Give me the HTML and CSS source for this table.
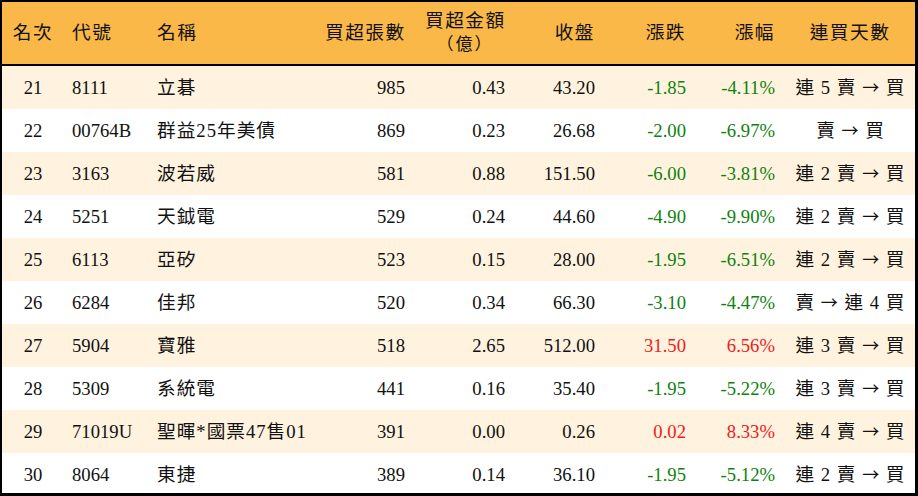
FILE: index.html
```html
<!DOCTYPE html>
<html lang="zh-Hant">
<head>
<meta charset="utf-8">
<title>買超排行</title>
<link rel="stylesheet" href="styles.css">
</head>
<body>
<div class="frame">
<table class="rank">
<colgroup>
<col class="c1"><col class="c2"><col class="c3"><col class="c4"><col class="c5"><col class="c6"><col class="c7"><col class="c8"><col class="c9">
</colgroup>
<thead>
<tr>
<th class="ctr">名次</th>
<th class="lft">代號</th>
<th class="lft">名稱</th>
<th class="rgt">買超張數</th>
<th class="ctr two"><span class="ln">買超金額</span><span class="ln paren">（億）</span></th>
<th class="rgt">收盤</th>
<th class="rgt">漲跌</th>
<th class="rgt">漲幅</th>
<th class="ctr">連買天數</th>
</tr>
</thead>
<tbody>
<tr class="odd"><td class="ctr">21</td><td class="lft">8111</td><td class="lft nm">立碁</td><td class="rgt">985</td><td class="rgt">0.43</td><td class="rgt">43.20</td><td class="rgt dn">-1.85</td><td class="rgt dn">-4.11%</td><td class="ctr dy">連 5 賣 <span class="ar">→</span> 買</td></tr>
<tr><td class="ctr">22</td><td class="lft">00764B</td><td class="lft nm">群益25年美債</td><td class="rgt">869</td><td class="rgt">0.23</td><td class="rgt">26.68</td><td class="rgt dn">-2.00</td><td class="rgt dn">-6.97%</td><td class="ctr dy">賣 <span class="ar">→</span> 買</td></tr>
<tr class="odd"><td class="ctr">23</td><td class="lft">3163</td><td class="lft nm">波若威</td><td class="rgt">581</td><td class="rgt">0.88</td><td class="rgt">151.50</td><td class="rgt dn">-6.00</td><td class="rgt dn">-3.81%</td><td class="ctr dy">連 2 賣 <span class="ar">→</span> 買</td></tr>
<tr><td class="ctr">24</td><td class="lft">5251</td><td class="lft nm">天鉞電</td><td class="rgt">529</td><td class="rgt">0.24</td><td class="rgt">44.60</td><td class="rgt dn">-4.90</td><td class="rgt dn">-9.90%</td><td class="ctr dy">連 2 賣 <span class="ar">→</span> 買</td></tr>
<tr class="odd"><td class="ctr">25</td><td class="lft">6113</td><td class="lft nm">亞矽</td><td class="rgt">523</td><td class="rgt">0.15</td><td class="rgt">28.00</td><td class="rgt dn">-1.95</td><td class="rgt dn">-6.51%</td><td class="ctr dy">連 2 賣 <span class="ar">→</span> 買</td></tr>
<tr><td class="ctr">26</td><td class="lft">6284</td><td class="lft nm">佳邦</td><td class="rgt">520</td><td class="rgt">0.34</td><td class="rgt">66.30</td><td class="rgt dn">-3.10</td><td class="rgt dn">-4.47%</td><td class="ctr dy">賣 <span class="ar">→</span> 連 4 買</td></tr>
<tr class="odd"><td class="ctr">27</td><td class="lft">5904</td><td class="lft nm">寶雅</td><td class="rgt">518</td><td class="rgt">2.65</td><td class="rgt">512.00</td><td class="rgt up">31.50</td><td class="rgt up">6.56%</td><td class="ctr dy">連 3 賣 <span class="ar">→</span> 買</td></tr>
<tr><td class="ctr">28</td><td class="lft">5309</td><td class="lft nm">系統電</td><td class="rgt">441</td><td class="rgt">0.16</td><td class="rgt">35.40</td><td class="rgt dn">-1.95</td><td class="rgt dn">-5.22%</td><td class="ctr dy">連 3 賣 <span class="ar">→</span> 買</td></tr>
<tr class="odd"><td class="ctr">29</td><td class="lft">71019U</td><td class="lft nm">聖暉*國票47售01</td><td class="rgt">391</td><td class="rgt">0.00</td><td class="rgt">0.26</td><td class="rgt up">0.02</td><td class="rgt up">8.33%</td><td class="ctr dy">連 4 賣 <span class="ar">→</span> 買</td></tr>
<tr><td class="ctr">30</td><td class="lft">8064</td><td class="lft nm">東捷</td><td class="rgt">389</td><td class="rgt">0.14</td><td class="rgt">36.10</td><td class="rgt dn">-1.95</td><td class="rgt dn">-5.12%</td><td class="ctr dy">連 2 賣 <span class="ar">→</span> 買</td></tr>
</tbody>
</table>
</div>
</body>
</html>
```
FILE: styles.css
```css
html, body {
  margin: 0;
  padding: 0;
  background: #ffffff;
}
.frame {
  width: 918px;
  height: 496px;
  box-sizing: border-box;
  border-style: solid;
  border-color: #000;
  border-width: 2px 3px 3px 2px;
  background: #fff;
}
.rank {
  width: 913px;
  table-layout: fixed;
  border-collapse: separate;
  border-spacing: 0;
  font-family: "Liberation Serif", "Noto Sans CJK TC", serif;
  font-size: 18.67px;
  color: #111;
}
.c1 { width: 60px; }
.c2 { width: 85px; }
.c3 { width: 168px; }
.c4 { width: 100px; }
.c5 { width: 100px; }
.c6 { width: 90px; }
.c7 { width: 91px; }
.c8 { width: 89px; }
.c9 { width: 130px; }
.rank th {
  height: 59px;
  padding: 0 10px;
  background: #f9b848;
  border-bottom: 2px solid #000;
  font-weight: normal;
  letter-spacing: 1.5px;
  line-height: 22px;
  white-space: nowrap;
  vertical-align: middle;
}
.rank th.two {
  padding-bottom: 3px;
}
.ln {
  display: block;
  line-height: 22px;
}
.paren {
  font-family: "Noto Sans CJK TC", sans-serif;
  font-feature-settings: "fwid" 1;
  font-size: 17px;
  letter-spacing: 2px;
}
.rank td {
  height: 43px;
  padding: 0 10px;
  white-space: nowrap;
  vertical-align: middle;
  line-height: 22px;
}
.rank td.nm {
  letter-spacing: 1px;
}
.rank td.dy {
  word-spacing: 2px;
}
.ar {
  font-family: "Noto Sans CJK TC", sans-serif;
  font-size: 17px;
}
.rank tr.odd td {
  background: #fff3df;
}
.ctr { text-align: center; }
.lft { text-align: left; }
.rgt { text-align: right; }
.rank td.ctr:first-child, .rank th.ctr:first-child {
  padding: 0 0 0 2px;
}
.dn { color: #0e820e; }
.up { color: #f21a1a; }
```
